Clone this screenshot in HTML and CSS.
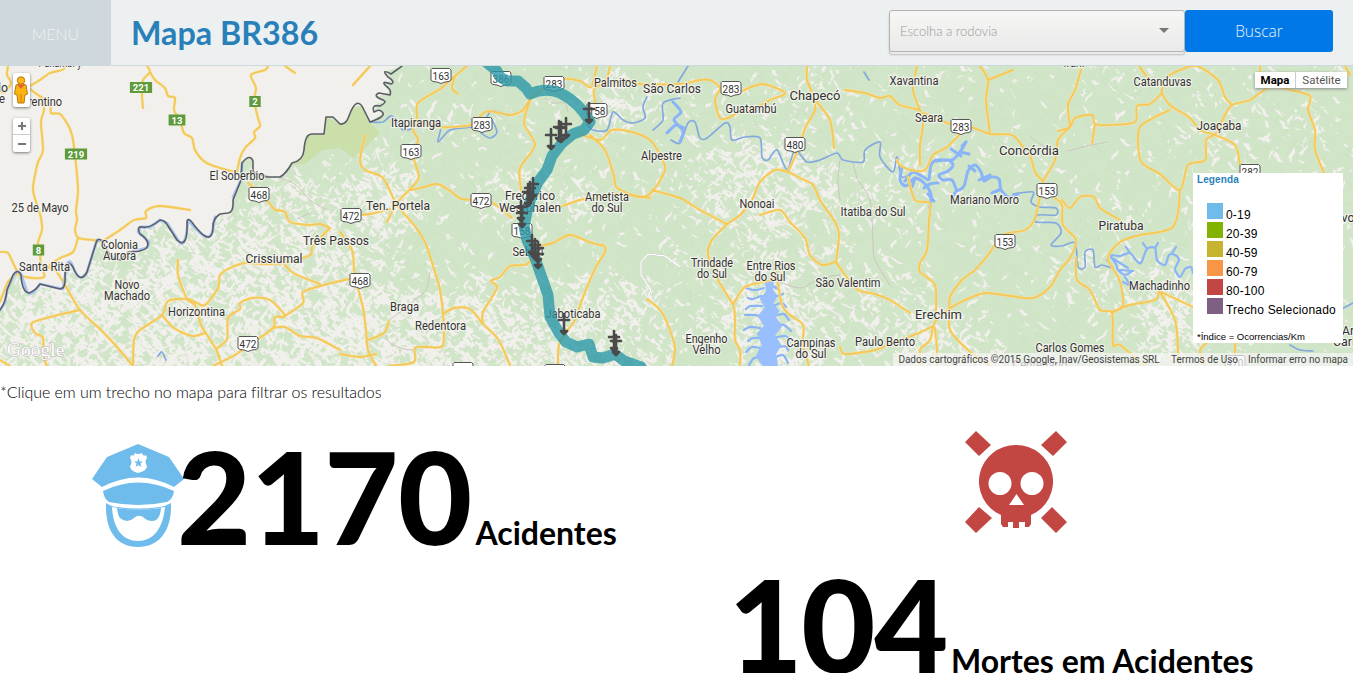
FILE: index.html
```html
<!DOCTYPE html>
<html lang="pt-BR">
<head>
<meta charset="utf-8">
<title>Mapa BR386</title>
<link rel="stylesheet" href="styles.css">
</head>
<body>
<header class="topbar">
  <a class="menu">MENU</a>
  <h1 class="title">Mapa BR386</h1>
  <form class="search">
    <div class="select"><span>Escolha a rodovia</span><i class="caret"></i></div>
    <button class="submit" type="button">Buscar</button>
  </form>
</header>
<section class="map">
  <svg class="canvas" viewBox="0 66 1353 300" width="1353" height="300">
    <rect class="land" x="0" y="66" width="1353" height="300"/>
    <g id="terrain"></g>
    <path class="plain" d="M0 66H402L383 72 393 80 385 83 390 92 377 97 385 102 378 103 375 109 383 113 370 122 362 106 353 107 347 122 340 123 333 117 326 117 324 134 306 135 303 157 292 162 280 177 253 172 253 160 248 158 242 163 241 180 233 197 230 213 215 217 213 230 210 237 200 233 188 220 187 243 180 243 167 223 160 220 150 227 140 227 138 232 148 242 147 248 117 260 102 241 97 240 87 272 78 277 71 263 67 262 63 289 40 284 33 292 27 292 21 273 15 273 7 290 0 310Z"/>
    <path class="park" d="M292 165L303 157 306 135 324 134 326 117 340 124 349 120 353 107 362 106 370 122 380 133 366 147 353 158 340 148 322 150 305 164Z"/>
    <g class="minor smooth">
      <path d="M280 177L296 185 310 200 327 210M297 219L310 213M430 272L426 290 415 300 400 312 389 320M384 332L390 343 404 349 415 350M545 98L553 103 565 103 568 112M840 160L838 180 840 200M853 162L858 180 870 200 873 240 875 260 890 285M770 278L800 288 820 278 840 275M1068 151L1083 147 1107 142M1030 137L1045 147M1290 230L1275 272 1283 300"/>
    </g>
    <path class="white-road" d="M680 267L665 256 648 254 641 262 641 275 651 290 647 299"/>
    <g class="water-line smooth">
      <path d="M370 122L383 122 392 116 403 130 413 128 417 124 440 125 438 142 450 130 472 127 483 125 491 111 507 115M491 118L497 132 490 138 481 133M587 125L593 130 607 130 613 112 623 120 633 123 645 118 643 107 647 97M653 130L663 120 663 103 680 98M671 140L680 143 688 123 695 122 700 138 707 138 725 123 730 127 732 140 745 137 760 138 762 157 768 160 777 150 787 170 795 150 807 162 820 160 837 153 843 160 863 162 865 150 880 142 880 157 893 172 897 157 902 177 913 172"/>
      <path d="M1013 194L1033 192 1031 202 1040 207 1056 208 1056 215 1038 215 1036 222 1056 223 1061 233 1051 245 1062 246 1075 243 1078 267 1085 267 1085 252 1093 250 1095 267 1102 265 1113 268 1107 260"/>
      <path d="M1290 345L1300 350 1313 351M1340 310L1353 303M678 82L688 66M864 72L869 80M158 356L162 352 166 360"/>
    </g>
    <g class="river smooth">
      <path d="M673 102L681 112 674 120 683 131 680 142M667 133L676 125 684 128M902 167L900 180 906 186 915 178 925 184 931 195 930 208M905 181L913 172 925 178 929 179 931 165 937 160 952 160 960 152 966 142M937 161L948 160 953 165 948 171 939 175 943 180 952 180 957 190 964 186 968 171 975 165 981 172 984 181 991 177 999 179 1001 190 1009 197 1018 194"/>
      <path d="M924 188L930 184 938 183M934 201L928 194M961 156L951 149M960 152L969 154M975 171L969 166M979 180L990 175M915 178L912 187M957 190L953 196M999 190L992 193M966 142L962 146"/>
    </g>
    <g class="creek smooth">
      <path d="M1111 257L1116 264 1118 270 1125 275 1131 272M1111 255L1120 256 1130 253 1136 260 1141 263 1147 249 1155 248 1157 260 1165 265 1169 255 1175 255 1179 260 1175 269 1180 277 1185 269 1191 267 1193 273M1112 258L1128 268M1120 270L1133 271M1125 277L1130 285 1123 282M1130 253L1126 247M1147 249L1143 243M1155 248L1158 243M1172 253L1176 247"/>
      <path d="M764 288L755 290 746 288M761 296L753 299 748 298M762 306L750 306 746 309M764 318L755 315 745 315M760 328L750 327 744 330M763 338L753 338 748 341M760 348L752 347 746 352M762 358L754 358 749 365M771 285L778 289M774 297L783 294M773 306L782 303 786 307M778 315L784 314 789 320M775 325L784 325 791 331M777 337L786 336 789 340M776 348L785 346 788 350M774 358L783 355 788 363"/>
    </g>
    <path class="lake" d="M767 283L772 282 771 290 775 296 771 304 777 311 774 318 780 326 773 335 779 345 774 354 776 366 765 366 758 356 764 345 759 334 766 326 760 316 767 308 762 299 768 292Z"/>
    <g id="roads" class="smooth">
      <path d="M8 66L7 75 11 83 5 92 0 92M66 66L62 70 50 73 40 80 30 86M30 89L38 95 50 103 51 113 60 114 68 125 72 135 75 155 78 190 76 210 77 220 75 230 79 238 93 240 102 241 120 230 134 220 146 218 146 211 160 206 190 210M30 89L41 98 44 110 41 122 43 150 38 162 35 175 33 190 37 205 41 218 42 230 38 243 40 255 42 265 55 270 65 285 80 310 100 329 117 347 133 366M133 366L134 340 140 330 162 315 168 301 187 299 197 303 205 305 218 288 220 275 230 268 245 263 260 264 285 263 310 255 312 247 320 238 330 228M330 228L320 224 309 225 290 222 285 212 275 210"/>
      <path d="M147 66L150 72 143 80 142 95 143 108M150 72L155 80 165 88 168 96 175 98 174 110 180 120 184 133 192 138 195 150 205 162 220 168 235 172M268 66L265 70 251 75 256 88 254 100 258 118 260 126 254 132 255 138 245 148 240 158 237 172M248 183L262 195 275 210M285 66L295 73M0 252L8 253 14 265 20 275 33 278 44 277 43 270M0 302L8 282 18 273M78 238L73 252 60 258 50 265M80 310L54 316 32 323 35 333 43 338 43 355 47 366M0 360L10 366M178 260L178 275 187 299 195 305 201 325 205 332 216 349 222 366M162 315L174 328 192 336 205 333M216 349L227 339 228 318 240 309 240 303 252 298 270 300 285 316 275 317 273 328 252 343 235 355 213 366M285 316L303 303 303 292 324 285 353 278M273 328L285 327 300 336 317 338 340 350M285 265L295 274 320 284"/>
      <path d="M467 66L455 76 440 89 418 103 417 120 413 130 418 140 413 155 419 177 411 188 397 203 387 222M390 209L370 214 353 215M365 135L360 160 365 170 383 178 397 205 414 225 425 242 435 272 440 290 443 314 443 345 428 347 415 348 414 362 390 366M411 190L424 187 437 184 449 190 462 199 485 200 496 205 512 218M370 66L353 85M455 76L452 88 458 94M413 120L440 127 465 126 472 124 485 112 495 112 510 115 523 110 531 98 545 88 560 79 580 81 591 87 597 66M531 98L524 123 535 145 520 168 521 190M340 232L352 250 354 268 357 284 363 308 366 330 368 350 376 366M340 354L360 357 376 354M368 340L384 333 389 321M443 314L454 308 470 309 482 323M483 323L483 312 497 288 491 281 500 277 510 266 527 264 540 247 553 243 570 235 592 243 604 246 605 252 597 265 590 280 582 300 575 320 568 330 559 345 558 366M482 323L498 339 507 358 510 366M647 299L660 310 668 325 675 348 672 366M560 207L580 200 600 197 615 194 650 198"/>
      <path d="M610 66L606 80 594 90 596 105M580 134L600 140 612 130 632 132 650 140 660 155 665 170 652 192 640 197 617 188 614 176 605 150 590 135M652 190L680 198 700 210 727 224M727 224L740 215 752 200 760 182 775 170 788 172 800 178 813 185 820 200 835 222 839 235 836 262M836 262L845 275 858 290 875 294 890 300 910 313M933 326L919 333 895 342 875 350 845 354 840 347M616 83L625 80 640 84 680 84 700 80 710 80 720 88 715 100 720 118 728 118 740 112 755 108 770 100 785 93 762 84 740 92M807 66L807 80 813 95 815 110 805 128 800 145 788 172M815 100L830 120 834 148M845 90L865 93 880 98 890 96 900 105 920 110M920 110L923 125 920 145 920 165M908 177L915 200 930 203 929 220 927 250 920 263 920 272 935 285 936 312M920 110L913 90 917 66M923 113L940 120 960 128 974 128 990 134 1012 135 1023 147 1030 155 1035 172 1043 181M1043 181L1055 160 1058 140 1070 127M1070 127L1068 105 1075 90 1082 66M960 134L947 147 933 155 925 170 910 170 900 165 897 160M980 66L988 80 986 100 990 134M988 80L1013 70"/>
      <path d="M727 224L712 240 708 255 718 280 733 305 735 320 735 340 740 350 740 366M733 305L745 287 770 280 777 272M777 278L782 305 790 315 803 325 803 345 809 366M760 215L780 210 790 222 805 238 810 255 822 265 835 262M950 311L950 297 962 280 975 270 988 255 1003 235 1025 230 1035 218 1043 181M950 308L965 300 985 293 1010 296 1033 298 1050 287 1060 270 1070 258 1076 240 1063 225 1062 205 1055 198M950 308L935 322 930 340 920 350 922 366M935 328L937 350 937 366M950 310L950 330 968 350 990 366M1076 258L1077 280 1090 290 1100 310 1112 313 1113 345 1120 345 1145 366M1112 313L1123 305 1121 285 1117 275 1108 258 1120 242 1140 235 1160 232 1173 227 1178 213 1180 190M1112 312L1130 305 1155 300 1159 291M1159 291L1193 307M1159 290L1175 320 1178 350 1180 366M1062 200L1070 208 1080 197 1094 197 1100 208 1120 220"/>
      <path d="M1139 66L1150 80 1162 84 1162 93 1170 105 1190 118 1200 130 1215 135 1235 145 1240 165M1162 93L1150 104 1137 106 1135 122 1110 125 1095 124 1092 115 1075 118 1070 127 1058 131M1095 124L1092 143M1170 110L1153 118 1140 127 1138 145 1142 163 1160 174 1180 190 1188 165 1205 160 1206 140 1215 135M1215 135L1225 115 1232 105 1250 100 1270 87 1290 90 1310 96 1308 110 1315 130 1315 150 1325 175M1168 76L1180 70 1197 66 1218 80 1225 97 1232 105M1205 366L1200 350 1210 340M1260 66L1262 85 1270 87M1235 366L1235 343M1345 66L1350 75"/>
    </g>
    <path class="water-edge" d="M0 310L5 303 7 290 15 273Q18 270 21 274L27 292Q30 295 34 292L40 284 63 289 67 264Q70 258 73 267 80 285 87 272L97 240 102 241M133 251L147 248 149 242 138 232 141 227 150 227 160 220 167 223 180 243Q186 247 188 220L200 233Q211 242 213 229L215 217M233 197L241 180 242 163"/>
    <path class="border" d="M0 310Q6 302 7 290L13 275Q18 268 21 275 22 292 29 293 35 291 40 284L60 289Q66 289 65 275 66 257 73 267 80 285 87 272L96 243Q98 236 103 242 110 260 120 260L128 252Q148 252 148 244 147 238 140 234 136 226 142 227 149 229 160 220 165 220 168 226L177 240Q188 250 187 222 188 216 194 225 211 247 213 229 212 219 220 214L228 213Q234 212 233 200L241 180 242 163Q250 153 253 161L253 172 267 177 280 177Q286 174 292 163 303 161 304 150 305 134 312 134L324 134 326 117 333 117 340 124Q346 125 349 116 357 94 364 110L370 122Q385 117 383 113 380 108 374 112 371 104 380 106 388 102 383 100 372 96 379 93L390 95Q392 90 386 86 380 80 391 84 396 82 388 77 380 68 391 74L402 66"/>
    <g id="shields"></g>
    <g id="labels"></g>
    <g class="route">
      <path d="M486 62L497 71 500 77 507 81 518 81 526 88 530 94Q545 87 560 93 579 102 590 122L584 130 573 134 562 143 552 156 547 170 538 182 531 198 527 212 524 226 527 240 535 258 541 275 548 295 550 317 559 333 566 342 577 347 589 344 593 357 603 358 615 354 624 361 641 367"/>
    </g>
    <g id="crosses"></g>
    <text class="google" x="7" y="356">Google</text>
  </svg>
  <div class="pegman">
    <svg width="14" height="28" viewBox="0 0 14 28"><path d="M2 9Q7 6 12 9L13.500 18 11 19 10 27H4L3 19 .5 18Z" fill="#fbb40f" stroke="#bd7410"/><path d="M3 8.500H11L7 13Z" fill="#e2623c"/><circle cx="7" cy="4.500" r="3.700" fill="#fdb813" stroke="#bd7410"/><path d="M7 18V27" stroke="#c97c12"/></svg>
  </div>
  <div class="zoom"><i class="plus"></i><i class="minus"></i></div>
  <div class="types"><b>Mapa</b><span>Satélite</span></div>
  <aside class="legend">
    <h2>Legenda</h2>
    <ul>
      <li><i class="c1"></i>0-19</li>
      <li><i class="c2"></i>20-39</li>
      <li><i class="c3"></i>40-59</li>
      <li><i class="c4"></i>60-79</li>
      <li><i class="c5"></i>80-100</li>
      <li><i class="c6"></i>Trecho Selecionado</li>
    </ul>
    <p>*Índice = Ocorrencias/Km</p>
  </aside>
  <div class="credits"><span class="data">Dados cartográficos ©2015 Google, Inav/Geosistemas SRL</span><span class="terms">Termos de Uso</span><span class="report">Informar erro no mapa</span></div>
</section>
<p class="hint">*Clique em um trecho no mapa para filtrar os resultados</p>
<main class="stats">
  <section class="stat accidents">
    <svg class="police" width="93" height="104" viewBox="92 444 93 104">
      <path d="M138 444L169 457 184 479 174 487Q138 468 102 487L92 479 107 457Z"/>
      <path d="M103 491Q138 474 174 491 173 499 167 502 138 508 109 502 104 499 103 491Z"/>
      <path fill-rule="evenodd" d="M106 503Q112 507 117 507 138 510 160 507 166 506 171 503C172 530 160 547 138 547S105 530 106 503ZM112 507C113 529 123 541 138 541S163 529 165 507Q138 512 112 507Z"/>
      <path d="M117 508Q138 511 161 508 160 521 152 521 147 521 143 517 138 514 134 518 127 524 120 518 118 516 117 508Z"/>
      <path class="badge" d="M131 455Q134 457 135 453 138 455 142 453 143 457 146 455L147 458Q144 462 147 466 147 471 138 473 130 471 130 466 133 462 130 458Z"/>
      <path d="M138.500 458L139.700 461.500H143L140.400 463.500 141.400 467 138.500 464.900 135.600 467 136.600 463.500 134 461.500H137.300Z"/>
    </svg>
    <p class="figure"><strong>2170</strong> <small>Acidentes</small></p>
  </section>
  <section class="stat deaths">
    <svg class="skull" width="104" height="104" viewBox="964 430 104 104">
      <path d="M976 431L991 445 979 456 965 442ZM1056 431L1067 442 1053 456 1041 445ZM979 507L992 518 976 533 965 522ZM1052 507L1067 522 1056 533 1041 518Z"/>
      <path fill-rule="evenodd" d="M1016 445A36.500 36.500 0 0 1 1031 515V524L1029 527H1025V522H1019V528H1013V522H1008V527H1003L1001 524V515A36.500 36.500 0 0 1 1016 445ZM1000 472A11.500 11.500 0 1 0 1000 495 11.500 11.500 0 1 0 1000 472ZM1032 472A11.500 11.500 0 1 0 1032 495 11.500 11.500 0 1 0 1032 472ZM1016.500 494L1009 505H1024Z"/>
    </svg>
    <p class="figure"><strong>104</strong> <small>Mortes em Acidentes</small></p>
  </section>
</main>
<script src="map.js"></script>
</body>
</html>
```
FILE: styles.css
```css
* { box-sizing: border-box; }
body { margin: 0; height: 673px; overflow: hidden; background: #fff; color: #000; font-family: Lato, sans-serif; }
h1, h2, p, ul { margin: 0; padding: 0; }
.topbar { display: flex; height: 66px; background: #ecf0f1; border-bottom: 1px solid #ced9de; }
.menu { width: 111px; height: 65px; background: #cfd8dc; color: #ecf0f1; font-weight: 300; font-size: 16px; line-height: 67px; text-align: center; }
.title { margin-left: 20px; color: #2980b9; font-size: 32.3px; font-weight: 700; line-height: 66px; }
.search { display: flex; margin: 10px 20px 0 auto; }
.select { display: flex; justify-content: space-between; width: 296px; height: 42px; padding: 0 15px 0 10px; border: 1px solid #b5b1b1; border-radius: 3px; background: linear-gradient(#f6f6f4, #eaeaea); box-shadow: 0 3px 1px -1px #eee, 0 3px 2px #bbb; color: #999; font-weight: 300; font-size: 13px; line-height: 41px; }
.caret { margin-top: 17px; width: 0; height: 0; border: 5px solid transparent; border-top-color: #777; border-bottom: 0; }
.submit { width: 148px; height: 42px; padding: 0; border: 0; border-radius: 3px; background: #0078e7; color: #e6f1fc; font: 300 15.5px "Open Sans", sans-serif; }

.map { position: relative; height: 300px; overflow: hidden; font-family: Roboto, sans-serif; }
.canvas { display: block; }
.land { fill: #d1e5c8; }
.plain { fill: #f2f0ed; }
.park { fill: #cbdfaa; }
.canvas path { stroke-linejoin: round; stroke-linecap: round; }
.minor { fill: none; stroke: #ccc5c0; stroke-width: 1; }
.white-road { fill: none; stroke: #fff; stroke-width: 1.6; filter: drop-shadow(0 0 .7px #888); }
.water-line { fill: none; stroke: #84a9de; stroke-width: 1.7; }
.river { fill: none; stroke: #8ab4f8; stroke-width: 3; }
.creek { fill: none; stroke: #8ab4f8; stroke-width: 2.2; }
.lake { fill: #99bfff; stroke: #99bfff; stroke-width: 4; }
.casing { fill: none; stroke: #f8e29a; stroke-width: 2.8; }
.road { fill: none; stroke: #f4c95c; stroke-width: 1.9; }
.border { fill: none; stroke: #5c5e68; stroke-width: 1.6; }
.water-edge { fill: none; stroke: #a5c3f3; stroke-width: 2.8; }
.route { fill: none; stroke: #2b98a8; stroke-opacity: .8; stroke-width: 11; }
.label { fill: #333; stroke: #f6f5f0; stroke-width: 2.5; stroke-opacity: .8; paint-order: stroke; text-anchor: middle; font-size: 12px; }
.city { font-size: 13px; }
.shield { fill: #fff; stroke: #555; stroke-width: 1; }
.number { fill: #333; font-size: 10px; text-anchor: middle; }
.route-box { fill: #5f9b3c; }
.route-number { fill: #fff; font-size: 9.5px; font-weight: 700; text-anchor: middle; }
.cross { stroke: #4a4a4a; stroke-width: 2.6; fill: #4a4a4a; }
.google { fill: #fff; stroke: #bbb; stroke-width: 1.2; paint-order: stroke; font: 19.500px "Liberation Serif", serif; }

.pegman, .zoom, .types, .legend, .credits { position: absolute; background: #fff; }
.pegman { left: 13px; top: 7px; width: 17px; height: 34px; padding: 3px 1px; border-radius: 2px; box-shadow: 0 1px 3px #777; }
.zoom { left: 13px; top: 52px; width: 17px; height: 34px; border-radius: 2px; box-shadow: 0 1px 3px #777; }
.zoom i { display: block; height: 17px; background: linear-gradient(#777, #777) center / 8px 2px no-repeat; }
.zoom .plus { border-bottom: 1px solid #ccc; background: linear-gradient(#777, #777) center / 8px 2px no-repeat, linear-gradient(#777, #777) center / 2px 8px no-repeat; }
.types { display: flex; right: 6px; top: 6px; height: 16px; box-shadow: 0 1px 3px #888; font-size: 11.5px; line-height: 17px; color: #565656; }
.types b { width: 41px; border-right: 1px solid #ccc; color: #000; font-weight: 700; text-align: center; }
.types span { width: 51px; text-align: center; }
.legend { left: 1193px; top: 107px; width: 150px; height: 170px; padding: 0 4px; font-family: "Liberation Sans", sans-serif; }
.legend h2 { color: #2980b9; font-size: 10px; line-height: 14px; letter-spacing: .1px; }
.legend ul { padding: 16px 0 0 10px; list-style: none; font-size: 12px; letter-spacing: .2px; }
.legend li { display: flex; gap: 3px; height: 19px; line-height: 25px; white-space: nowrap; }
.legend li i { flex: none; width: 16px; height: 16px; }
.legend p { margin-top: 13px; font-size: 9.500px; line-height: 14px; white-space: nowrap; }
.c1 { background: #6fbbeb; }
.c2 { background: #83b200; }
.c3 { background: #c7b42e; }
.c4 { background: #f79646; }
.c5 { background: #c24642; }
.c6 { background: #7f6084; }
.credits { display: flex; right: 0; bottom: 0; height: 13px; padding-right: 6px; background: rgba(245, 245, 245, .72); color: #444; font-size: 10px; line-height: 14px; white-space: nowrap; }
.credits span { text-align: center; }
.data { width: 268px; padding-left: 4px; letter-spacing: -.03px; }
.terms { width: 87px; }
.report { width: 99px; }

.hint { height: 53px; font-weight: 300; font-size: 16px; line-height: 51px; letter-spacing: -.055px; }
.stats { display: grid; grid-template-columns: 1fr 1fr; height: 254px; overflow: hidden; }
.police { display: block; flex: none; margin-top: 25px; fill: #6fbbeb; }
.police .badge { fill: #fff; }
.accidents { display: flex; padding-left: 92px; }
.figure { white-space: nowrap; font-weight: 700; line-height: 154px; }
.figure strong { font-size: 128px; }
.figure small { font-size: 32px; }
.accidents .figure { margin-left: -8px; }
.accidents strong { letter-spacing: -.6px; }
.skull { display: block; margin: 11px 0 0 287px; fill: #c24642; }
.deaths .figure { margin: 13px 0 0 52px; }
.deaths strong { letter-spacing: -1.4px; }
```
FILE: map.js
```js
const NS = 'http://www.w3.org/2000/svg';
function add(parent, tag, attrs, text) {
  const el = document.createElementNS(NS, tag);
  for (const k in attrs) el.setAttribute(k, attrs[k]);
  if (text) el.textContent = text;
  parent.appendChild(el);
  return el;
}
const byId = id => document.getElementById(id);

// Terrain: open fields (light) mixed with woods (green), centre and radii of the open areas
const open = [
  [90, 330, 150, 75, .95], [230, 330, 120, 75, .95], [250, 270, 130, 55, .84], [370, 340, 90, 55, .92], [440, 340, 90, 60, .86],
  [380, 200, 40, 45, .7], [310, 210, 60, 40, .55], [610, 105, 45, 30, .65], [540, 195, 60, 30, .5],
  [590, 330, 80, 50, .7], [510, 340, 60, 50, .75], [760, 190, 70, 50, .7], [820, 240, 50, 60, .3], [770, 320, 60, 60, .7],
  [945, 350, 50, 35, .7], [850, 310, 70, 50, .3], [1170, 320, 35, 50, .75], [1225, 130, 50, 40, .25],
  [1090, 270, 50, 40, .25], [910, 190, 50, 40, .25], [810, 100, 40, 40, .3], [1290, 130, 40, 60, .2], [680, 310, 40, 60, .25]
];
let seed = 386;
const rnd = () => (seed = (seed * 16807) % 2147483647) / 2147483647;
function openness(x, y) {
  let v = .07;
  for (const [cx, cy, rx, ry, s] of open) {
    const d = ((x - cx) / rx) ** 2 + ((y - cy) / ry) ** 2;
    v = Math.max(v, s * Math.exp(-d * d * .6));
  }
  return v;
}
for (let b = 0; b < 110; b++) {
  const d = ['', ''];
  for (let i = 0; i < 180; i++) {
    const x = rnd() * 1370 - 8, y = 60 + rnd() * 310;
    const k = rnd() < openness(x, y) ? 1 : 0;
    const a = rnd() < .6 ? .3 + rnd() * .8 : 1.8 + rnd() * .9;
    const l = 2.5 + rnd() * 6, w = 1 + rnd() * 1.7, c = Math.cos(a), s = Math.sin(a);
    const p = (u, v) => (x + u * c - v * s).toFixed(1) + ' ' + (y + u * s + v * c).toFixed(1) + ' ';
    d[k] += 'M' + p(-l, 0) + 'L' + p(-l * .3, -w) + p(l * .2, -w * .4) + p(l, -w) + p(l * .5, w) + p(-l * .2, w * .6) + 'Z';
  }
  add(byId('terrain'), 'path', { d: d[0], fill: b % 4 ? '#d1e5c8' : '#cfe3c5' });
  add(byId('terrain'), 'path', { d: d[1], fill: '#f2f0ed' });
}

// Turn polylines into curves through the same points
document.querySelectorAll('.smooth path').forEach(path => {
  const out = path.getAttribute('d').split('M').filter(Boolean).map(part => {
    const n = part.match(/[\d.]+/g).map(Number), pts = [];
    for (let i = 0; i < n.length; i += 2) pts.push([n[i], n[i + 1]]);
    let s = 'M' + pts[0];
    for (let i = 0; i < pts.length - 1; i++) {
      const a = pts[i - 1] || pts[i], b = pts[i], c = pts[i + 1], e = pts[i + 2] || c;
      s += `C${b[0] + (c[0] - a[0]) / 7} ${b[1] + (c[1] - a[1]) / 7} ${c[0] - (e[0] - b[0]) / 7} ${c[1] - (e[1] - b[1]) / 7} ${c[0]} ${c[1]}`;
    }
    return s;
  });
  path.setAttribute('d', out.join(''));
});

// Roads: each gets a pale casing beneath the yellow line
const roads = byId('roads');
const lines = [...roads.children];
lines.forEach(p => {
  const casing = p.cloneNode();
  casing.setAttribute('class', 'casing');
  roads.insertBefore(casing, lines[0]);
  p.setAttribute('class', 'road');
});

[[163, 441, 76], [386, 501, 79], [283, 554, 84], [283, 482, 125], [158, 597, 111], [163, 411, 152], [472, 481, 201],
 [472, 351, 216], [468, 259, 195], [468, 360, 281], [472, 248, 344], [158, 522, 231], [283, 731, 89], [480, 795, 145],
 [283, 961, 127], [153, 1047, 191], [153, 1005, 242], [282, 1250, 172], ['', 463, 370], ['', 555, 372], [470, 1235, 363]
].forEach(([n, x, y]) => {
  add(byId('shields'), 'path', { class: 'shield', d: `M${x - 8.5} ${y - 7.5}H${x + 8.5}L${x + 10} ${y - 6}V${y + 4}L${x + 8} ${y + 5.5}Q${x + 4} ${y + 5.5} ${x} ${y + 7.5}Q${x - 4} ${y + 5.5} ${x - 8} ${y + 5.5}L${x - 10} ${y + 4}V${y - 6}Z` });
  add(byId('shields'), 'text', { class: 'number', x, y: y + 3.5 }, String(n));
});
[[221, 141, 87.5], [13, 177, 120], [2, 255, 101.5], [219, 76, 154], [8, 38.500, 250]].forEach(([n, x, y]) => {
  const w = String(n).length * 5.4 + 6;
  add(byId('shields'), 'rect', { class: 'route-box', x: x - w / 2, y: y - 5.5, width: w, height: 11 });
  add(byId('shields'), 'text', { class: 'route-number', x, y: y + 3.5 }, String(n));
});

// name, centre x, baseline y, width, size class
[['lo', 3, 92, 10], ['e', 2, 103, 6], ['rentino', 45, 106, 34], ['El Soberbio', 237, 180, 55], ['25 de Mayo', 40, 212, 57],
 ['Colonia', 119.500, 249, 37], ['Aurora', 119.500, 260, 33], ['Santa Rita', 44.500, 271, 51], ['Novo', 127, 289, 25],
 ['Machado', 127, 300, 46], ['Horizontina', 196.500, 316, 57], ['Crissiumal', 274, 263, 57], ['Três Passos', 336, 245, 66],
 ['Ten. Portela', 398, 210, 64], ['Itapiranga', 416, 127, 50], ['Braga', 404.500, 311, 29], ['Redentora', 440.500, 330, 51],
 ['Frederico', 530, 200, 50], ['Westphalen', 530, 212, 62], ['Seberi', 528, 256, 31], ['Jaboticaba', 573, 318, 55],
 ['Palmitos', 615.500, 87, 43], ['São Carlos', 672, 93, 58], ['Alpestre', 661.500, 160, 41], ['Ametista', 607, 201, 44],
 ['do Sul', 607, 212, 31], ['Chapecó', 815, 100, 51, 1], ['Guatambú', 751, 113, 51], ['Xavantina', 914, 85, 49], ['Seara', 929, 122, 28],
 ['Catanduvas', 1162.500, 86, 58], ['Joaçaba', 1219, 129.500, 45], ['Concórdia', 1029, 155, 60, 1], ['Nonoai', 757, 208, 35],
 ['Itatiba do Sul', 873, 216, 65], ['Mariano Moro', 984.500, 204, 69], ['Piratuba', 1121, 230, 45], ['Machadinho', 1159.500, 290, 61],
 ['Trindade', 712, 267, 42], ['do Sul', 712, 278, 30], ['Entre Rios', 771, 270, 49], ['do Sul', 770, 281, 31],
 ['São Valentim', 848, 287, 65], ['Erechim', 938.500, 319, 47, 1], ['Engenho', 706.500, 343, 42], ['Velho', 706.500, 354, 28],
 ['Campinas', 811, 347, 49], ['do Sul', 811, 358, 31], ['Paulo Bento', 885, 346, 60], ['Carlos Gomes', 1070, 352, 69],
 ['Centenário', 1040, 369, 55], ['vo', 1348, 222, 13], ['Ar', 1348, 335, 12], ['Cari', 1344, 346, 22], ['Irani', 1074, 67, 21], ['Panambí y', 60, 66.5, 43]
].forEach(([t, x, y, w, big]) => add(byId('labels'), 'text', { class: 'label' + (big ? ' city' : ''), x, y, textLength: w, lengthAdjust: 'spacingAndGlyphs' }, t));

// Crosses mark fatal crashes; x, tip y
[[589, 125], [551, 151], [559, 143], [561, 144], [566, 140], [533, 200], [530, 204], [528, 208], [521, 223], [522, 229],
 [532, 257], [535, 261], [538, 264], [538, 270], [564, 336], [614, 353], [616, 357]
].forEach(([x, y]) => add(byId('crosses'), 'path', { class: 'cross', d: `M${x} ${y - 22}V${y - 5}M${x - 5} ${y - 16}H${x + 5}M${x - 3} ${y - 5}H${x + 3}L${x} ${y - 2}Z` }));
```
